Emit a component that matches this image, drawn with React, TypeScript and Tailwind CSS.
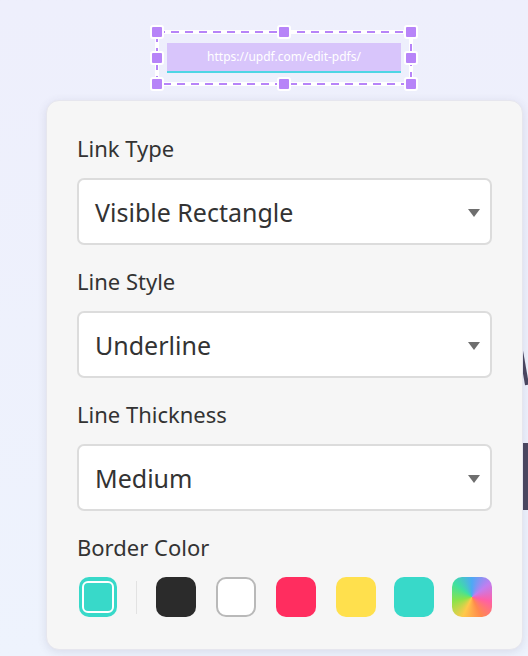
import { useState } from "react";

const font = { fontFamily: '"Noto Sans", "Open Sans", sans-serif' };

const sections = [
  { label: "Link Type", value: "Visible Rectangle" },
  { label: "Line Style", value: "Underline" },
  { label: "Line Thickness", value: "Medium" },
];

const swatches = [
  "bg-[#2b2b2b]",
  "bg-white border-2 border-[#b9b9b9]",
  "bg-[#ff2d5f]",
  "bg-[#ffe04d]",
  "bg-[#38d9c9] -ml-[2px]",
];

function Handle({ x, y }: { x: number; y: number }) {
  return (
    <div
      className="absolute w-[14px] h-[14px] -ml-[7px] -mt-[7px] rounded-[3px] bg-[#b784f8] border-2 border-white"
      style={{ left: x, top: y }}
    />
  );
}

function Caret() {
  return (
    <svg width="12" height="8" viewBox="0 0 12 8">
      <path d="M0 0 H12 L6 8 Z" fill="#6e6e6e" />
    </svg>
  );
}

export default function App() {
  const [selected, setSelected] = useState(-1);

  return (
    <div
      className="relative h-[656px] w-[528px] overflow-hidden bg-gradient-to-b from-[#eeeffc] to-[#eef3fd]"
      style={font}
    >
      {/* bits of the page behind the panel */}
      <svg className="absolute left-[518px] top-[345px]" width="10" height="45" viewBox="0 0 10 45">
        <path d="M2 0 L9 40" stroke="#4b4760" strokeWidth="4" />
      </svg>
      <div className="absolute left-[522px] top-[443px] w-[10px] h-[67px] bg-[#4b4760]" />

      {/* selected link on the canvas */}
      <div className="relative ml-[150px] mt-[25px] w-[268px] h-[66px]">
        <svg className="absolute inset-0" width="268" height="66" viewBox="0 0 268 66">
          <rect x="7" y="7" width="254" height="52" fill="none" stroke="#ffffff" strokeWidth="4" />
          <rect x="7" y="7" width="254" height="52" fill="none" stroke="#b784f8" strokeWidth="2" strokeDasharray="8 6" />
        </svg>
        <div className="absolute left-[17px] top-[18px] w-[234px] h-[30px] bg-[#d8c5fb] border-b-2 border-[#4fd6e4] flex items-center justify-center text-[12px] text-white">
          https://updf.com/edit-pdfs/
        </div>
        {[7, 134, 261].map((x) =>
          [7, 33, 59].map((y) =>
            x === 134 && y === 33 ? null : <Handle key={`${x}-${y}`} x={x} y={y} />
          )
        )}
      </div>

      {/* properties panel */}
      <div className="relative ml-[46px] mt-[9px] w-[477px] h-[550px] rounded-[13px] bg-[#f6f6f6] shadow-[0_2px_10px_rgba(60,60,100,0.12)] border border-[#e6e6ee] px-[30px] pt-[32px]">
        {sections.map((s) => (
          <div key={s.label} className="mb-[21px]">
            <div className="h-[30px] flex items-center text-[22px] text-[#333333]">{s.label}</div>
            <div className="mt-[15px] h-[67px] rounded-[7px] border-2 border-[#dcdcdc] bg-white flex items-center justify-between pl-[16px] pr-[10px] pt-[3px]">
              <span className="text-[25px] text-[#333333]">{s.value}</span>
              <Caret />
            </div>
          </div>
        ))}

        <div className="h-[30px] flex items-center text-[22px] text-[#333333]">Border Color</div>
        <div className="mt-[15px] flex items-center pl-[2px]">
          <button
            onClick={() => setSelected(-1)}
            className="w-[40px] h-[40px] rounded-[10px] bg-[#38d9c9] flex items-center justify-center"
          >
            <div className="w-[32px] h-[32px] rounded-[6px] border-2 border-white" />
          </button>
          <div className="mx-[19px] w-px h-[33px] bg-[#e2e2e2]" />
          <div className="flex items-center gap-[20px]">
            {swatches.map((c, i) => (
              <button
                key={i}
                onClick={() => setSelected(i)}
                className={`w-[40px] h-[40px] rounded-[10px] ${c}`}
              />
            ))}
            <button
              onClick={() => setSelected(5)}
              className="-ml-[2px] w-[40px] h-[40px] rounded-[10px] bg-[conic-gradient(from_0deg,#4ea8f5,#c17ef0,#ff5fa6,#ff8a4d,#ffc94a,#8be34a,#3fe0a0,#4ea8f5)]"
            />
          </div>
        </div>
      </div>
    </div>
  );
}
